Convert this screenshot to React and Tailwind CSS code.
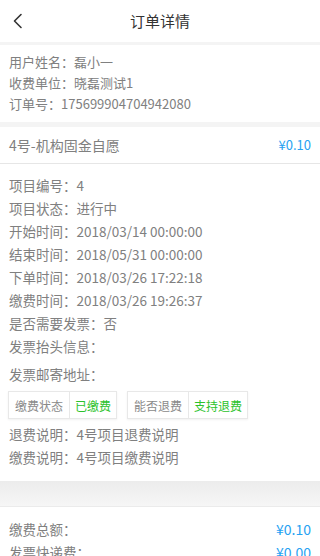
import React from 'react';

const font = { fontFamily: '"Noto Sans CJK SC", "Noto Sans", sans-serif' };

const userInfo = [
  { label: '用户姓名', value: '磊小一' },
  { label: '收费单位', value: '晓磊测试1' },
  { label: '订单号', value: '175699904704942080' },
];

const projectInfo = [
  { label: '项目编号', value: '4' },
  { label: '项目状态', value: '进行中' },
  { label: '开始时间', value: '2018/03/14 00:00:00' },
  { label: '结束时间', value: '2018/05/31 00:00:00' },
  { label: '下单时间', value: '2018/03/26 17:22:18' },
  { label: '缴费时间', value: '2018/03/26 19:26:37' },
  { label: '是否需要发票', value: '否' },
  { label: '发票抬头信息', value: '' },
];

const Tag = ({ label, value }) => (
  <div className="flex h-[28px] border border-[#e8e8e8] shadow-[0_1px_2px_rgba(0,0,0,0.06)] text-[12px]">
    <div className="flex items-center px-[6px] text-[#8a8a8a] border-r border-[#e8e8e8]">{label}</div>
    <div className="flex items-center px-[5px] text-[#2cc22c]">{value}</div>
  </div>
);

const App = () => {
  return (
    <div className="min-h-screen bg-[#f4f4f4]" style={font}>
      {/* header */}
      <div className="relative h-[42px] bg-white flex items-center justify-center">
        <button className="absolute left-[10px] top-[12px] w-[16px] h-[18px] flex items-center justify-center">
          <svg width="12" height="16" viewBox="0 0 12 16" fill="none">
            <polyline points="9,1.5 2.5,8 9,14.5" stroke="#333" strokeWidth="1.6" strokeLinecap="round" strokeLinejoin="round" />
          </svg>
        </button>
        <h1 className="text-[15px] text-[#333]">订单详情</h1>
      </div>

      <div className="mt-[3px] bg-white pt-[6px] pb-[8px] px-[9px] text-[13px] text-[#808080] leading-[21px]">
        {userInfo.map(item => (
          <div key={item.label}>{item.label}：{item.value}</div>
        ))}
      </div>

      <div className="mt-[5px] bg-white">
        <div className="h-[37px] flex items-center justify-between px-[9px] border-b border-[#e6e6e6]">
          <span className="text-[14px] text-[#808080]">4号-机构固金自愿</span>
          <span className="text-[13px] text-[#27a2f2]">¥0.10</span>
        </div>
        <div className="pt-[10px] pb-[12px] px-[9px] text-[13.5px] text-[#808080] leading-[23px]">
          {projectInfo.map(item => (
            <div key={item.label}>{item.label}：{item.value}</div>
          ))}
          <div className="mt-[5px]">发票邮寄地址：</div>
          <div className="flex gap-[10px] mt-[5px] mb-[4px] -ml-[1px]">
            <Tag label="缴费状态" value="已缴费" />
            <Tag label="能否退费" value="支持退费" />
          </div>
          <div>退费说明：4号项目退费说明</div>
          <div>缴费说明：4号项目缴费说明</div>
        </div>
      </div>

      <div className="h-[26px] bg-gradient-to-b from-[#ececec] to-[#f6f6f6] border-b border-[#ebebeb]"></div>

      <div className="bg-white pt-[11px] pb-[10px] px-[9px] text-[13.5px] leading-[23px]">
        <div className="flex justify-between">
          <span className="text-[#808080]">缴费总额：</span>
          <span className="text-[14px] text-[#27a2f2]">¥0.10</span>
        </div>
        <div className="flex justify-between">
          <span className="text-[#808080]">发票快递费：</span>
          <span className="text-[14px] text-[#27a2f2]">¥0.00</span>
        </div>
      </div>
    </div>
  );
};

export default App;
